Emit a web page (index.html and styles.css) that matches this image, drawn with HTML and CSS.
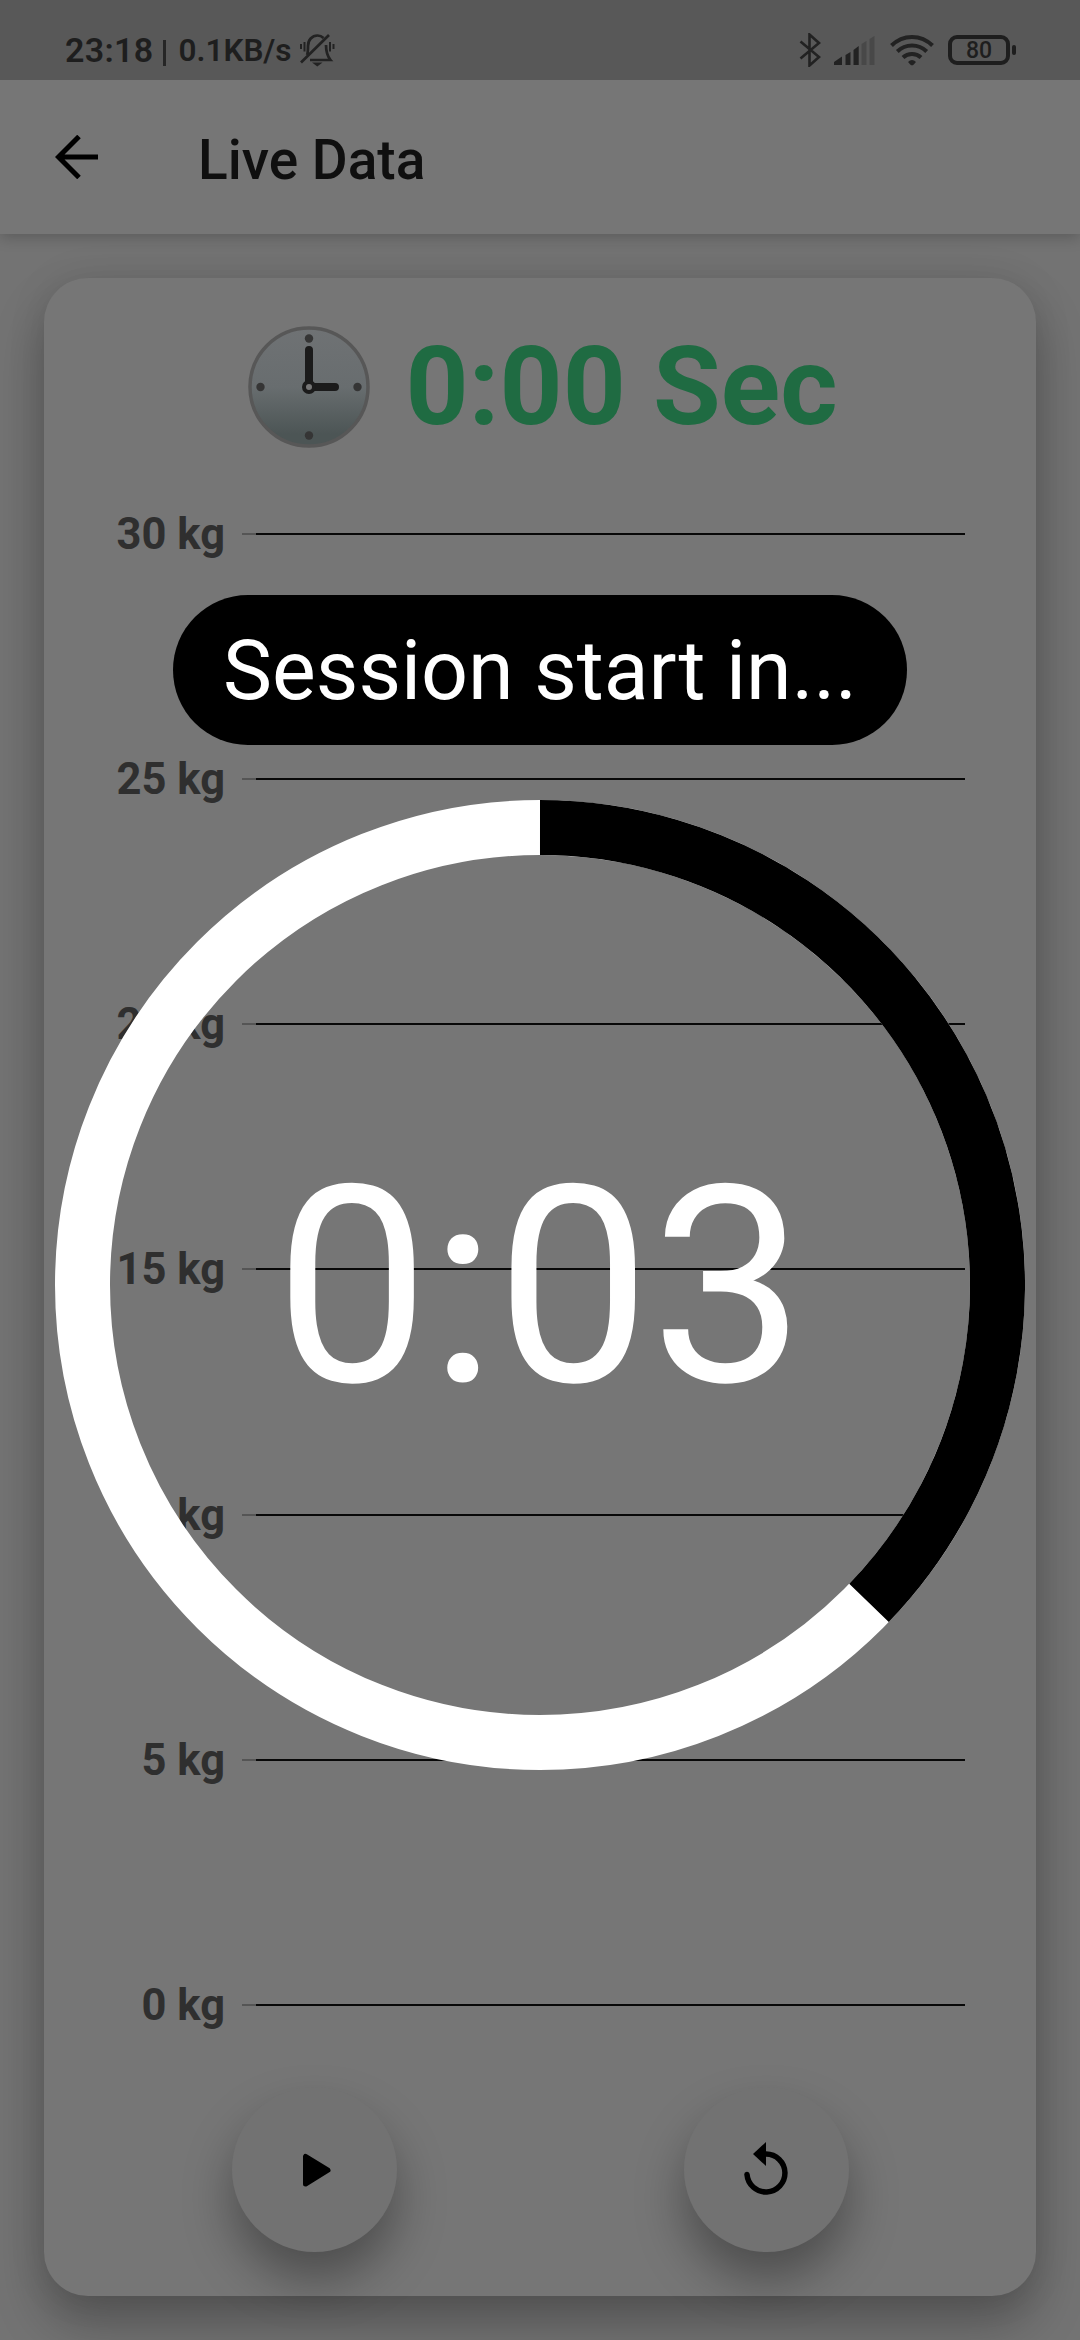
FILE: index.html
```html
<!DOCTYPE html>
<html lang="en">
<head>
<meta charset="utf-8">
<title>Live Data</title>
<link rel="stylesheet" href="styles.css">
</head>
<body>
<div class="screen">
  <div class="status">
    <span class="time">23:18</span><span class="sep"></span><span class="speed">0.1KB/s</span>
    <svg class="bell" width="36" height="36" viewBox="0 0 36 36" fill="none" stroke="#222" stroke-width="2.7">
      <path d="M8 23c1-2 1-5 1-9 0-6 4-10.500 9.500-10.500 2.500 0 4.500 1 6 2.500M27 13c0 6 .5 10 4.500 15H11M2 30.500 30 3"/>
      <path d="M13 30.500h10.500l-5.200 4z" fill="#222" stroke="none"/>
      <path d="M2 12v5M5.500 10v9.500M31 10v9.500M34.500 12v5" stroke-width="2"/>
    </svg>
    <div class="status-right">
      <svg class="bt" width="22" height="34" viewBox="0 0 22 34" fill="none" stroke="#222" stroke-width="2.600"><path d="M1.500 8.500 20 24l-9.500 8.500v-31L20 10 1.500 25.500"/></svg>
      <svg class="signal" width="42" height="30" viewBox="0 0 42 30"><path d="M1 29v-3l8-5.500V29zM12.500 29V19l5-3v13zM20.500 29V14l5.200-4v19z" fill="#222"/><path d="M28.500 29V8l5-3v24zM36.500 29V3l5-3v29z" fill="#484848"/></svg>
      <svg class="wifi" width="44" height="32" viewBox="0 0 44 32" fill="none" stroke="#222" stroke-width="4"><path d="M1.500 11.500c11.500-11.500 29.500-11.500 41 0M7.300 17.500c8.300-8 21.100-8 29.400 0M13 23.500c5-4.700 13-4.700 18 0"/><path d="M18 28q4-4 8 0l-2.500 2.700q-1.500 1.300-3 0z" fill="#222" stroke="none"/></svg>
      <div class="battery">80</div><i class="battery-tip"></i>
    </div>
  </div>
  <header class="appbar">
    <svg width="44" height="44" viewBox="0 0 44 44" fill="none" stroke="#000" stroke-width="5"><path d="M43 22H4M24 1.500 3.500 22 24 42.500"/></svg>
    <h1>Live Data</h1>
  </header>
  <main class="content">
    <section class="card">
      <div class="timer">
        <svg width="122" height="122" viewBox="0 0 122 122">
          <defs><linearGradient id="face" x1="0" y1="0" x2="0" y2="1"><stop offset="0" stop-color="#6f7274"/><stop offset=".5" stop-color="#686d6f"/><stop offset=".9" stop-color="#4c5555"/></linearGradient></defs>
          <circle cx="61" cy="61" r="59" fill="url(#face)" stroke="#575757" stroke-width="3.500"/>
          <g fill="#353535"><circle cx="61" cy="12.500" r="4.200"/><circle cx="12.500" cy="61" r="4.200"/><circle cx="109.500" cy="61" r="4.200"/><circle cx="61" cy="109.500" r="4.200"/></g>
          <path d="M61 61V24M61 61h26" stroke="#1b1b1b" stroke-width="8" stroke-linecap="round"/>
          <circle cx="61" cy="61" r="5" fill="#777" stroke="#1b1b1b" stroke-width="4"/>
        </svg>
        <span>0:00 Sec</span>
      </div>
      <div class="chart">
        <div class="row"><b>30 kg</b><i></i></div>
        <div class="row"><b>25 kg</b><i></i></div>
        <div class="row"><b>20 kg</b><i></i></div>
        <div class="row"><b>15 kg</b><i></i></div>
        <div class="row"><b>10 kg</b><i></i></div>
        <div class="row"><b>5 kg</b><i></i></div>
        <div class="row"><b>0 kg</b><i></i></div>
      </div>
      <div class="actions">
        <button aria-label="Start"><svg width="60" height="60" viewBox="0 0 60 60"><path d="M21.500 16.500v27.500L44 30.200z" stroke="#000" stroke-width="5" stroke-linejoin="round"/></svg></button>
        <button aria-label="Reset"><svg width="60" height="60" viewBox="0 0 60 60"><path d="M30 14a19 19 0 1 1-19 20.500" fill="none" stroke="#000" stroke-width="5.500" stroke-linecap="round"/><path d="M17 14 30 2V26z"/></svg></button>
      </div>
    </section>
  </main>
  <div class="overlay">
    <div class="pill">Session start in...</div>
    <div class="dial">
      <svg width="970" height="970" viewBox="0 0 970 970" fill="none" stroke-width="55">
        <circle cx="485" cy="485" r="457.500" stroke="#fff"/>
        <path d="M485 27.500A457.500 457.500 0 0 1 814 802.900" stroke="#000"/>
      </svg>
      <span>0:03</span>
    </div>
  </div>
</div>
</body>
</html>
```
FILE: styles.css
```css
* { box-sizing: border-box; }
body { margin: 0; font-family: Roboto, "Liberation Sans", sans-serif; }
.screen {
  position: relative;
  display: flex;
  flex-direction: column;
  width: 1080px;
  height: 2340px;
  overflow: hidden;
  background: #737373;
}
.status {
  display: flex;
  align-items: center;
  height: 80px;
  padding: 20px 64px 0 65px;
  background: #585858;
  color: #1e1e1e;
  z-index: 2;
}
.time { font-size: 34px; font-weight: 600; letter-spacing: .3px; }
.sep { width: 3px; height: 26px; margin: 5px 12px 0 10px; background: #262626; }
.speed { font-size: 31.5px; font-weight: 600; }
.bell { margin-left: 7px; }
.status-right { display: flex; align-items: center; margin-left: auto; }
.signal { margin-left: 12px; margin-top: 2px; }
.wifi { margin-left: 15px; }
.battery {
  width: 62px;
  height: 30px;
  margin-left: 14px;
  border: 4px solid #1e1e1e;
  border-radius: 9px;
  font-size: 23px;
  font-weight: 500;
  line-height: 24px;
  text-align: center;
}
.battery-tip { width: 4px; height: 10px; margin-left: 2px; border-radius: 2px; background: #1e1e1e; }
.appbar {
  display: flex;
  align-items: center;
  gap: 99px;
  height: 154px;
  padding-left: 55px;
  background: #767676;
  box-shadow: 0 3px 14px rgba(0, 0, 0, .22);
  z-index: 1;
}
.appbar h1 { margin: 5px 0 0; font-size: 55px; font-weight: 500; color: #0f0f0f; }
.content { flex: 1; padding: 44px 44px; }
.card {
  display: flex;
  flex-direction: column;
  height: 2018px;
  border-radius: 44px;
  background: #767676;
  box-shadow: 0 28px 50px rgba(0, 0, 0, .27), 0 0 40px rgba(0, 0, 0, .08);
}
.timer {
  display: flex;
  align-items: center;
  justify-content: center;
  gap: 35px;
  height: 226px;
  padding: 0 0 8px 6px;
  color: #1f6b42;
  font-size: 110px;
  font-weight: 700;
  line-height: 128px;
}
.chart {
  display: flex;
  flex-direction: column;
  justify-content: space-between;
  height: 1531px;
  padding: 0 71px 0 60px;
}
.row { display: flex; align-items: center; height: 60px; }
.row b { width: 121px; margin-right: 17px; padding-top: 2px; text-align: right; font-size: 43.5px; line-height: 60px; color: #2f2f2f; }
.row i { flex: 1; height: 2px; background: linear-gradient(to right, #555 14px, #080808 14px); }
.actions { display: flex; justify-content: center; gap: 287px; padding-top: 52px; }
.actions button {
  display: flex;
  align-items: center;
  justify-content: center;
  width: 165px;
  height: 165px;
  padding: 0;
  border: 0;
  border-radius: 50%;
  background: #727272;
  box-shadow: 0 28px 48px rgba(0, 0, 0, .34);
}
.overlay {
  position: absolute;
  inset: 0;
  display: flex;
  flex-direction: column;
  align-items: center;
  padding-top: 595px;
  z-index: 3;
}
.pill {
  width: 734px;
  height: 150px;
  border-radius: 75px;
  background: #000;
  color: #fff;
  font-size: 82.5px;
  line-height: 151px;
  text-align: center;
  white-space: nowrap;
}
.dial { display: grid; place-items: center; width: 970px; height: 970px; margin-top: 55px; }
.dial > * { grid-area: 1 / 1; }
.dial span { padding-top: 5px; font-size: 275px; line-height: 1; color: #fff; }
```
